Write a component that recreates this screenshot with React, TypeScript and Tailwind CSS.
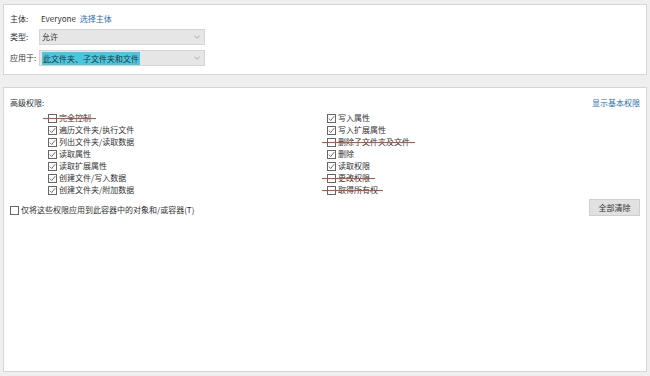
import React from 'react';

type Perm = { label: string; checked: boolean; struck?: boolean };

const left: Perm[] = [
  { label: '完全控制', checked: false, struck: true },
  { label: '遍历文件夹/执行文件', checked: true },
  { label: '列出文件夹/读取数据', checked: true },
  { label: '读取属性', checked: true },
  { label: '读取扩展属性', checked: true },
  { label: '创建文件/写入数据', checked: true },
  { label: '创建文件夹/附加数据', checked: true },
];

const right: Perm[] = [
  { label: '写入属性', checked: true },
  { label: '写入扩展属性', checked: true },
  { label: '删除子文件夹及文件', checked: false, struck: true },
  { label: '删除', checked: true },
  { label: '读取权限', checked: true },
  { label: '更改权限', checked: false, struck: true },
  { label: '取得所有权', checked: false, struck: true },
];

function Box({ checked }: { checked: boolean }) {
  return (
    <span className="flex h-[9px] w-[9px] shrink-0 items-center justify-center border border-[#666] bg-white">
      {checked && (
        <svg width="7" height="7" viewBox="0 0 7 7" fill="none">
          <path d="M0.8 3.6 L2.7 5.5 L6.2 1.2" stroke="#444" strokeWidth="0.8" />
        </svg>
      )}
    </span>
  );
}

function PermRow({ p }: { p: Perm }) {
  return (
    <li className="relative flex h-3 w-fit items-center gap-[2px]">
      <Box checked={p.checked} />
      <span className="leading-none">{p.label}</span>
      {p.struck && (
        <span className="absolute -left-[5px] -right-[5px] top-[6px] h-px bg-[#d04a3a]" />
      )}
    </li>
  );
}

function Select({ children }: { children: React.ReactNode }) {
  return (
    <div className="flex h-4 w-[166px] items-center justify-between border border-[#d4d4d4] bg-[#e6e6e6] pl-[2px] pr-[4px]">
      {children}
      <svg width="6" height="4" viewBox="0 0 6 4" fill="none">
        <path d="M0.5 0.8 L3 3.2 L5.5 0.8" stroke="#999" strokeWidth="0.8" />
      </svg>
    </div>
  );
}

export default function App() {
  return (
    <div
      className="flex h-[376px] w-[650px] flex-col gap-[12px] bg-[#efefef] px-[3px] pt-[4px] pb-[4px] text-[8px] text-[#333]"
      style={{ fontFamily: '"Noto Sans CJK SC", "Noto Sans", sans-serif' }}
    >
      <section className="flex h-[71px] flex-col gap-[4px] border border-[#d6d6d6] bg-white px-[6px] pt-[8px]">
        <div className="flex h-[12px] items-center">
          <span className="w-[31px]">主体:</span>
          <span className="mr-[4px]">Everyone</span>
          <span className="text-[#2a6fb5]">选择主体</span>
        </div>
        <div className="flex items-center">
          <span className="w-[29px]">类型:</span>
          <Select>
            <span>允许</span>
          </Select>
        </div>
        <div className="mt-[1px] flex items-center">
          <span className="w-[29px]">应用于:</span>
          <Select>
            <span className="bg-[#48c8e0] px-[1px] leading-[13px]">此文件夹、子文件夹和文件</span>
          </Select>
        </div>
      </section>

      <section className="flex flex-1 flex-col border border-[#d6d6d6] bg-white pl-[6px] pr-[6px] pt-[9px]">
        <div className="flex items-center justify-between">
          <span>高级权限:</span>
          <span className="text-[#2a6fb5]">显示基本权限</span>
        </div>
        <div className="mt-[3px] grid grid-cols-[279px_1fr] pl-[38px]">
          <ul className="flex flex-col">
            {left.map((p) => (
              <PermRow key={p.label} p={p} />
            ))}
          </ul>
          <ul className="flex flex-col">
            {right.map((p) => (
              <PermRow key={p.label} p={p} />
            ))}
          </ul>
        </div>
        <div className="mt-[3px] flex items-start justify-between">
          <label className="mt-[5px] flex items-center gap-[2px]">
            <Box checked={false} />
            <span>仅将这些权限应用到此容器中的对象和/或容器(T)</span>
          </label>
          <button className="h-[17px] w-[51px] border border-[#cfcfcf] bg-[#e1e1e1] text-[8px]">
            全部清除
          </button>
        </div>
      </section>
    </div>
  );
}
